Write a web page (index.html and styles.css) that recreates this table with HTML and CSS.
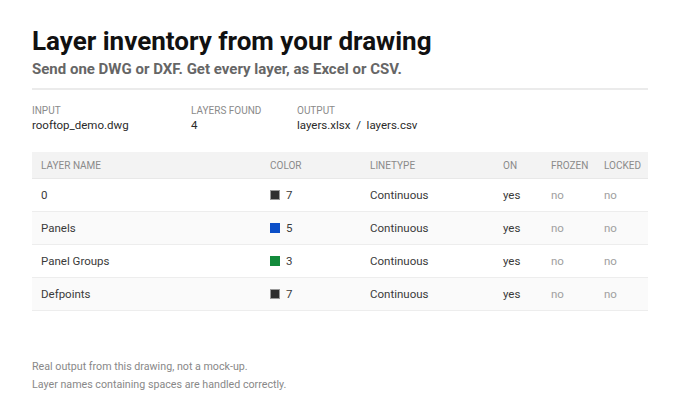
FILE: index.html
```html
<!DOCTYPE html>
<html lang="en">
<head>
<meta charset="UTF-8">
<title>Layer inventory</title>
<link rel="stylesheet" href="styles.css">
</head>
<body>
  <div class="page">
    <h1>Layer inventory from your drawing</h1>
    <p class="lead">Send one DWG or DXF. Get every layer, as Excel or CSV.</p>

    <div class="meta">
      <div class="meta-item meta-input">
        <div class="meta-label">Input</div>
        <div class="meta-value">rooftop_demo.dwg</div>
      </div>
      <div class="meta-item meta-count">
        <div class="meta-label">Layers found</div>
        <div class="meta-value">4</div>
      </div>
      <div class="meta-item">
        <div class="meta-label">Output</div>
        <div class="meta-value">layers.xlsx&nbsp; /&nbsp; layers.csv</div>
      </div>
    </div>

    <table class="layers">
      <colgroup>
        <col class="c-name"><col class="c-color"><col class="c-type"><col class="c-on"><col class="c-frozen"><col class="c-locked">
      </colgroup>
      <thead>
        <tr><th>Layer name</th><th>Color</th><th>Linetype</th><th>On</th><th>Frozen</th><th>Locked</th></tr>
      </thead>
      <tbody>
        <tr><td>0</td><td><span class="swatch swatch-7"></span>7</td><td>Continuous</td><td>yes</td><td class="muted">no</td><td class="muted">no</td></tr>
        <tr><td>Panels</td><td><span class="swatch swatch-5"></span>5</td><td>Continuous</td><td>yes</td><td class="muted">no</td><td class="muted">no</td></tr>
        <tr><td>Panel Groups</td><td><span class="swatch swatch-3"></span>3</td><td>Continuous</td><td>yes</td><td class="muted">no</td><td class="muted">no</td></tr>
        <tr><td>Defpoints</td><td><span class="swatch swatch-7"></span>7</td><td>Continuous</td><td>yes</td><td class="muted">no</td><td class="muted">no</td></tr>
      </tbody>
    </table>

    <div class="notes">
      <p>Real output from this drawing, not a mock-up.</p>
      <p>Layer names containing spaces are handled correctly.</p>
    </div>
  </div>
</body>
</html>
```

FILE: styles.css
```css
body {
    margin: 0;
    font-family: Roboto, "Liberation Sans", Arial, sans-serif;
    color: #222;
    background: #fff;
}
.page {
    padding: 26px 32px 0 32px;
}
h1 {
    font-size: 26px;
    font-weight: bold;
    line-height: 30px;
    margin: 0;
    color: #111;
}
.lead {
    font-size: 15px;
    font-weight: bold;
    line-height: 18px;
    color: #666;
    margin: 4px 0 0 0;
    padding-bottom: 10px;
    border-bottom: 2px solid #ebebeb;
}
.meta {
    display: flex;
    margin-top: 14px;
}
.meta-input { width: 159px; }
.meta-count { width: 106px; }
.meta-label {
    font-size: 10px;
    line-height: 13px;
    text-transform: uppercase;
    color: #8a8a8a;
}
.meta-value {
    font-size: 11.5px;
    line-height: 16px;
    color: #2a2a2a;
}
.layers {
    width: 616px;
    border-collapse: collapse;
    margin-top: 19px;
    table-layout: fixed;
}
.c-name { width: 229px; }
.c-color { width: 100px; }
.c-type { width: 133px; }
.c-on { width: 48px; }
.c-frozen { width: 53px; }
.c-locked { width: 53px; }
.layers th {
    background: #f3f3f3;
    font-size: 10px;
    font-weight: normal;
    text-transform: uppercase;
    text-align: left;
    color: #8a8a8a;
    height: 26px;
    padding: 0 9px;
    border-bottom: 1px solid #e8e8e8;
}
.layers td {
    font-size: 11.5px;
    color: #3a3a3a;
    height: 32px;
    padding: 0 9px;
    border-bottom: 1px solid #ededed;
    white-space: nowrap;
}
.layers tbody tr:nth-child(even) td {
    background: #fafafa;
}
.layers td.muted {
    color: #a0a0a0;
}
.swatch {
    display: inline-block;
    width: 10px;
    height: 10px;
    margin-right: 6px;
    vertical-align: -1px;
    box-sizing: border-box;
    border: 1px solid #999;
}
.swatch-7 { background: #2f2f2f; }
.swatch-5 { background: #0c4fc8; border-color: #0c4fc8; }
.swatch-3 { background: #128a3b; border-color: #128a3b; }
.notes {
    margin-top: 47px;
}
.notes p {
    font-size: 10.7px;
    line-height: 18px;
    color: #888;
    margin: 0;
}
```
